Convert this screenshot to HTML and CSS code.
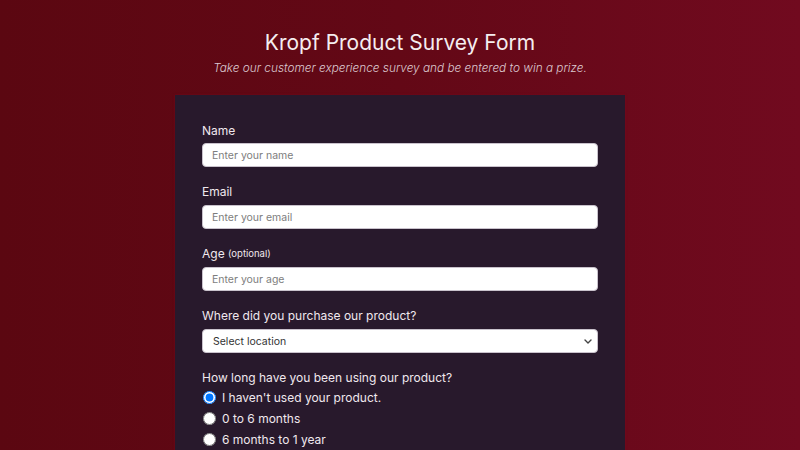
FILE: index.html
```html
<!DOCTYPE html>
<html lang="en">
<head>
<meta charset="utf-8">
<title>Kropf Product Survey Form</title>
<link rel="stylesheet" href="styles.css">
</head>
<body>
<header class="header">
  <h1 class="title">Kropf Product Survey Form</h1>
  <p class="subtitle">Take our customer experience survey and be entered to win a prize.</p>
</header>
<form class="card">
  <div class="field">
    <label class="label" for="name">Name</label>
    <input class="input" id="name" type="text" placeholder="Enter your name">
  </div>
  <div class="field">
    <label class="label" for="email">Email</label>
    <input class="input" id="email" type="email" placeholder="Enter your email">
  </div>
  <div class="field">
    <label class="label" for="age">Age <span class="optional">(optional)</span></label>
    <input class="input" id="age" type="number" placeholder="Enter your age">
  </div>
  <div class="field">
    <label class="label" for="loc">Where did you purchase our product?</label>
    <div class="select-wrap">
      <select class="input select" id="loc">
        <option>Select location</option>
      </select>
      <svg class="chevron" width="8" height="5" viewBox="0 0 8 5" aria-hidden="true"><path d="M1 1l3 3 3-3" fill="none" stroke="#444" stroke-width="1.4" stroke-linecap="round" stroke-linejoin="round"/></svg>
    </div>
  </div>
  <div class="field">
    <p class="label label-group">How long have you been using our product?</p>
    <label class="radio-row"><input class="radio" type="radio" name="use" checked>I haven't used your product.</label>
    <label class="radio-row"><input class="radio" type="radio" name="use">0 to 6 months</label>
    <label class="radio-row"><input class="radio" type="radio" name="use">6 months to 1 year</label>
  </div>
</form>
</body>
</html>
```
FILE: styles.css
```css
html, body {
  margin: 0;
  padding: 0;
}
body {
  background: linear-gradient(90deg, #5b0711 0%, #630816 50%, #710a1f 100%);
  font-family: Inter, "Open Sans", sans-serif;
  color: #f2eaee;
  height: 450px;
  overflow: hidden;
}
.header {
  text-align: center;
  padding-top: 30px;
}
.title {
  margin: 0;
  font-size: 21px;
  font-weight: 400;
  line-height: 26px;
  color: #f5eef0;
}
.subtitle {
  margin: 4px 0 0;
  font-size: 11.8px;
  line-height: 16px;
  font-style: italic;
  font-weight: 300;
  color: #dcc8d0;
}
.card {
  width: 450px;
  box-sizing: border-box;
  margin: 19px auto 0;
  padding: 27px 27px 20px;
  background: #28192c;
  box-shadow: 0 0 2px rgba(120, 10, 30, 0.8);
}
.field {
  display: flex;
  flex-direction: column;
  margin-bottom: 16px;
}
.label {
  margin: 0 0 3px;
  font-size: 12px;
  line-height: 18px;
  height: 18px;
  color: #f0e8ee;
}
.field:first-child .label {
  margin-bottom: 3px;
}
.label-group {
  margin-bottom: 0;
}
.optional {
  font-size: 9.5px;
  line-height: 10px;
  vertical-align: 1px;
}
.input {
  height: 24px;
  box-sizing: border-box;
  border: 1px solid #c9c2cc;
  border-radius: 4px;
  background: #fff;
  padding: 0 9px;
  font-family: inherit;
  font-size: 10.5px;
  color: #333;
  outline: none;
}
.input::placeholder {
  color: #7d7d7d;
}
.field + .field .label {
  margin-bottom: 4px;
}
.field + .field .label-group {
  margin-bottom: 0;
}
.select-wrap {
  position: relative;
  display: flex;
  flex-direction: column;
}
.select {
  appearance: none;
  -webkit-appearance: none;
  padding: 0 10px;
  color: #333;
}
.chevron {
  position: absolute;
  right: 6px;
  top: 10px;
  pointer-events: none;
}
.radio-row {
  display: flex;
  align-items: center;
  height: 21px;
  font-size: 12px;
  color: #f0e8ee;
}
.radio {
  width: 13px;
  height: 13px;
  margin: 0 6px 0 1px;
}
```
